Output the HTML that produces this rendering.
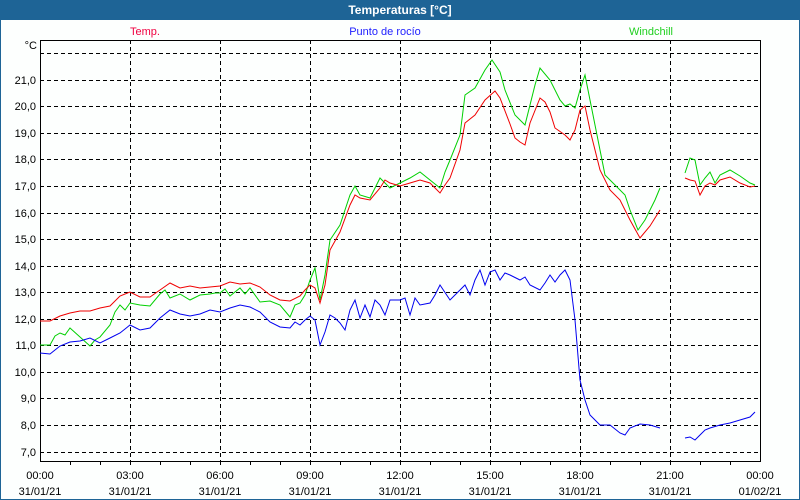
<!DOCTYPE html>
<html><head><meta charset="utf-8"><style>
body{margin:0;width:800px;height:500px;overflow:hidden;background:#fdfffe}
svg{display:block;font-family:"Liberation Sans",sans-serif}
</style></head><body>
<svg width="800" height="500" xmlns="http://www.w3.org/2000/svg">
<rect x="0" y="0" width="800" height="500" fill="#fdfffe"/>
<rect x="0.5" y="0.5" width="799" height="499" fill="none" stroke="#1e6496"/>
<rect x="0" y="0" width="800" height="20" fill="#1e6496"/>
<text x="400" y="14" fill="#fff" font-size="12" font-weight="bold" text-anchor="middle">Temperaturas [°C]</text>
<text x="145" y="35" fill="#f00040" font-size="11" text-anchor="middle">Temp.</text>
<text x="385" y="35" fill="#2020ff" font-size="11" text-anchor="middle">Punto de rocío</text>
<text x="651" y="35" fill="#20d020" font-size="11" text-anchor="middle">Windchill</text>
<g stroke="#000" stroke-dasharray="4,3" stroke-width="1">
<path d="M40 53.5H760M40 80.5H760M40 106.5H760M40 133.5H760M40 159.5H760M40 186.5H760M40 213.5H760M40 239.5H760M40 266.5H760M40 292.5H760M40 319.5H760M40 345.5H760M40 372.5H760M40 398.5H760M40 425.5H760M40 452.5H760"/>
<path d="M130.5 40V461M220.5 40V461M310.5 40V461M400.5 40V461M490.5 40V461M580.5 40V461M670.5 40V461"/>
</g>
<path d="M40.5 40.5H760.5V461.5H40.5Z" fill="none" stroke="#000"/>
<path d="M70.5 461V465M100.5 461V465M130.5 461V465M160.5 461V465M190.5 461V465M220.5 461V465M250.5 461V465M280.5 461V465M310.5 461V465M340.5 461V465M370.5 461V465M400.5 461V465M430.5 461V465M460.5 461V465M490.5 461V465M520.5 461V465M550.5 461V465M580.5 461V465M610.5 461V465M640.5 461V465M670.5 461V465M700.5 461V465M730.5 461V465" stroke="#000"/>
<g font-size="11" fill="#000" text-anchor="end">
<text x="37" y="49">°C</text>
<text x="36" y="84">21,0</text><text x="36" y="110">20,0</text><text x="36" y="137">19,0</text><text x="36" y="163">18,0</text><text x="36" y="190">17,0</text><text x="36" y="217">16,0</text><text x="36" y="243">15,0</text><text x="36" y="270">14,0</text><text x="36" y="296">13,0</text><text x="36" y="323">12,0</text><text x="36" y="349">11,0</text><text x="36" y="376">10,0</text><text x="36" y="402">9,0</text><text x="36" y="429">8,0</text><text x="36" y="456">7,0</text>
</g>
<g font-size="11" fill="#000" text-anchor="middle">
<text x="40" y="479">00:00</text><text x="40" y="495">31/01/21</text>
<text x="130" y="479">03:00</text><text x="130" y="495">31/01/21</text>
<text x="220" y="479">06:00</text><text x="220" y="495">31/01/21</text>
<text x="310" y="479">09:00</text><text x="310" y="495">31/01/21</text>
<text x="400" y="479">12:00</text><text x="400" y="495">31/01/21</text>
<text x="490" y="479">15:00</text><text x="490" y="495">31/01/21</text>
<text x="580" y="479">18:00</text><text x="580" y="495">31/01/21</text>
<text x="670" y="479">21:00</text><text x="670" y="495">31/01/21</text>
<text x="760" y="479">00:00</text><text x="760" y="495">01/02/21</text>
</g>
<g fill="none" stroke-width="1">
<polyline stroke="#00d000" points="40,345 50,345 55,336 60,333 65,335 70,328 80,337 90,346 95,340 100,337 110,325 115,312 120,305 125,310 130,303 140,305 150,306 160,294 165,290 170,298 180,294 190,300 200,295 210,294 215,293 220,293 225,289 230,296 240,288 245,294 250,288 260,302 270,301 280,305 290,317 295,305 300,303 305,295 310,280 315,268 320,300 325,275 330,240 340,225 350,195 355,186 360,195 370,198 380,178 390,188 400,183 410,178 420,172 430,180 440,188 445,172 450,160 460,135 465,95 475,88 485,70 492,60 500,72 505,90 515,115 525,125 535,85 540,68 550,80 560,100 565,106 570,104 575,108 580,90 585,75 590,100 600,150 605,175 615,185 625,195 630,210 638,230 645,220 655,200 660,188"/>
<polyline stroke="#00d000" points="685,173 690,158 695,160 700,185 705,178 710,172 715,183 720,175 730,170 740,176 750,183 755,185"/>
<polyline stroke="#f00000" points="40,321 50,321 60,316 70,313 80,311 90,311 100,308 110,306 120,296 130,292 140,297 150,297 160,290 170,283 180,288 190,286 200,288 210,287 220,286 230,282 240,284 250,283 260,287 270,295 280,300 290,301 300,296 305,290 310,285 315,288 320,303 325,285 330,250 340,232 350,205 355,195 360,198 370,200 380,188 385,180 390,183 400,186 410,183 420,180 430,183 440,193 445,185 450,178 460,150 465,123 475,115 485,100 495,91 500,98 510,124 515,138 520,142 525,145 530,123 540,98 545,102 550,112 555,128 565,135 570,140 575,130 580,110 585,106 590,130 600,170 610,190 620,200 630,220 640,238 650,226 660,210"/>
<polyline stroke="#f00000" points="685,178 690,180 695,181 700,195 705,186 710,183 715,185 720,180 730,177 740,183 750,187 755,186"/>
<polyline stroke="#0000f0" points="40,353 50,354 55,350 60,346 70,342 80,341 90,338 100,343 110,338 120,333 130,325 140,330 150,328 160,318 170,310 180,314 190,316 200,314 210,310 220,312 230,308 240,305 250,307 260,312 270,322 280,327 290,328 295,322 300,325 305,320 310,316 315,320 320,345 325,332 330,315 335,318 340,323 345,330 350,310 355,300 360,318 365,305 370,317 375,300 380,305 385,315 390,300 400,300 405,298 410,315 415,298 420,305 430,303 435,295 440,285 450,300 460,290 465,285 470,295 475,280 480,270 485,285 490,272 495,270 500,280 505,273 510,275 520,280 525,277 530,285 540,290 545,283 550,275 555,282 560,275 565,270 570,280 575,320 580,380 585,400 590,415 595,420 600,425 610,425 620,433 625,435 630,428 640,424 650,425 660,428"/>
<polyline stroke="#0000f0" points="685,438 690,437 695,440 700,435 705,430 710,428 720,425 730,423 740,420 750,417 755,412"/>
</g>
</svg>
</body></html>
